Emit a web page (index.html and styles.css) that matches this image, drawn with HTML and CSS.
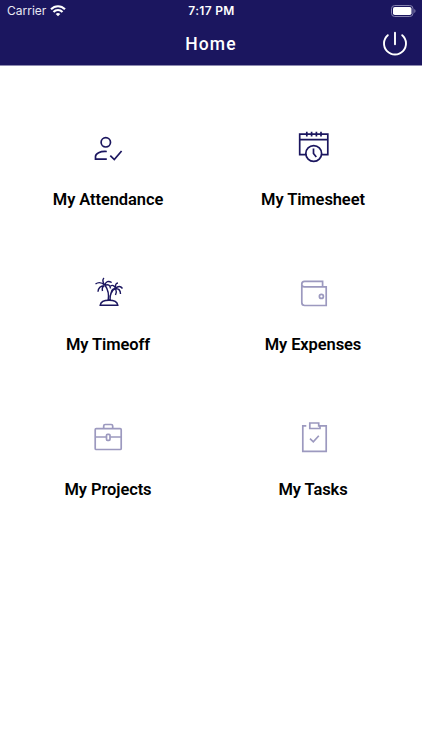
FILE: index.html
```html
<!DOCTYPE html>
<html lang="en">
<head>
<meta charset="utf-8">
<title>Home</title>
<link rel="stylesheet" href="styles.css">
</head>
<body>
<header class="header">
  <div class="status">
    <div class="carrier"><span>Carrier</span>
      <svg class="wifi" width="16" height="12" viewBox="0 0 16 12" fill="none" stroke="#fff" stroke-width="2.1"><path d="M1 4.3C5 .2 11 .2 15 4.3M3.5 7C6 4.3 10 4.3 12.500 7"/><path d="M8 11.300 5.700 9Q8 7 10.300 9Z" fill="#fff" stroke="none"/></svg>
    </div>
    <div class="time">7:17 PM</div>
    <svg class="battery" width="25" height="12" viewBox="0 0 25 12"><rect x=".5" y=".5" width="21.500" height="11" rx="3.200" fill="none" stroke="#8683b0"/><rect x="2" y="2" width="18.500" height="8" rx="1.800" fill="#fff"/><path d="M23.300 4v4q1.200-.6 1.200-2t-1.200-2" fill="#8683b0"/></svg>
  </div>
  <div class="navbar">
    <span></span>
    <h1 class="title">Home</h1>
    <svg class="power" width="26" height="26" viewBox="0 0 26 26" fill="none" stroke="#fff" stroke-width="1.900" stroke-linecap="round"><path d="M13 1.700v11.500M5.800 4.200a11 11 0 1 0 14.400 0"/></svg>
  </div>
</header>
<main class="menu">
  <div class="item">
    <svg class="icon" viewBox="0 0 50 45"><circle cx="21.800" cy="17.300" r="4.700"/><path d="M22.800 26.500C16 26 11.500 28.500 11.500 31.500V34.200H22.800M26.300 30.700l4 3.800 7.300-8.500"/></svg>
    <span class="label">My Attendance</span>
  </div>
  <div class="item">
    <svg class="icon" viewBox="0 0 50 45"><path d="M17.500 29.700H10.700V9.200H38.800V29.700H32M10.700 14.700H38.800M17.800 6.800v4.700M22.600 6.800v4.700M27.400 6.800v4.700M32 6.800v4.700"/><circle cx="24.700" cy="28.500" r="7.900"/><path d="M24.500 23.500v5l2.800 3.500"/></svg>
    <span class="label">My Timesheet</span>
  </div>
  <div class="item">
    <svg class="icon palm" viewBox="0 0 50 45"><path d="M16.200 35.200Q17 30.300 25 30.300T33.800 35.200ZM24.200 30.200C25 25 24 19.500 21.200 15.500M26 30.200C25.700 25 27.500 20.500 31.500 18.300"/><path d="M20.800 15.300Q16 10.700 11.500 14M20.500 15.500Q14.500 16 14 21.700M20.700 15.300Q22.500 9.500 27.700 12.500M20.500 15Q17.500 10 20 8M21 15.300Q26 13.500 26.500 18.500M20.500 15.500Q17.500 17 18.500 21M31.500 18.300Q29.500 14 26.500 16M31.500 18.300Q31 13 34 13M31.500 18.300Q35.500 14.500 38.500 18.500M31.500 18.500Q36.500 18.500 36.500 24M31.500 18.500Q33 21.500 31.500 25M31 18.500Q27 19.500 27.500 23"/></svg>
    <span class="label">My Timeoff</span>
  </div>
  <div class="item">
    <svg class="icon faded" viewBox="0 0 50 45"><path d="M33.600 16.800V11.300H15.500Q12.800 11.300 12.800 14.100T15.500 16.900H37.200V35.500H15.700Q12.800 35.500 12.800 32.500V14"/><circle cx="32.400" cy="26.400" r="2"/></svg>
    <span class="label">My Expenses</span>
  </div>
  <div class="item">
    <svg class="icon faded" viewBox="0 0 50 45"><rect x="11.200" y="13.700" width="26" height="20.800" rx="1"/><path d="M19.700 13.500V11Q19.700 9.500 21.200 9.500H27.200Q28.700 9.500 28.700 11V13.500M11.200 22H22.200M26.200 22H37.200"/><rect x="22.500" y="19.300" width="3.500" height="6" rx="1"/></svg>
    <span class="label">My Projects</span>
  </div>
  <div class="item">
    <svg class="icon faded" viewBox="0 0 50 45"><path d="M17.300 10.800H13.800V36.300H37.200V10.800H31.500M20.800 8H29.700V10.800H31V13.500H20.800ZM21 23.700l3.300 3.100 5.500-6.100"/></svg>
    <span class="label">My Tasks</span>
  </div>
</main>
</body>
</html>
```
FILE: styles.css
```css
* { box-sizing: border-box; }
body { margin: 0; background: #fff; color: #000; font-family: Roboto, sans-serif; }
.header { height: 66px; background: #1b165f; color: #fff; border-bottom: 1px solid #8e8bb0; }
.status {
  display: grid;
  grid-template-columns: 1fr auto 1fr;
  height: 22px;
  padding: 0 6px 0 7px;
  align-items: center;
  font: 12px/22px Inter, sans-serif;
}
.carrier { display: flex; align-items: center; gap: 4px; color: #e9e8f2; letter-spacing: 0; }
.time { font-weight: 600; font-size: 12px; letter-spacing: .3px; }
.battery { justify-self: end; margin-top: -1px; }
.navbar {
  display: grid;
  grid-template-columns: 1fr auto 1fr;
  height: 44px;
  padding: 0 14px;
  align-items: center;
}
.title { margin: 0; font-size: 17.5px; line-height: 44px; font-weight: 500; letter-spacing: 1.1px; }
.power { justify-self: end; margin-top: -1px; }
.menu {
  display: grid;
  grid-template-columns: 205px 205px;
  grid-auto-rows: 145px;
  padding: 59px 0 0 5.5px;
}
.item { display: flex; flex-direction: column; align-items: center; gap: 18px; }
.icon { width: 50px; height: 45px; margin-left: 1px; fill: none; stroke: #1b165f; stroke-width: 1.7; }
.faded { stroke: #9c99bf; }
.palm { stroke-width: 1.4; stroke-linecap: butt; }
.label { font-size: 16.5px; line-height: 24px; font-weight: 600; letter-spacing: -.1px; white-space: nowrap; }
```
